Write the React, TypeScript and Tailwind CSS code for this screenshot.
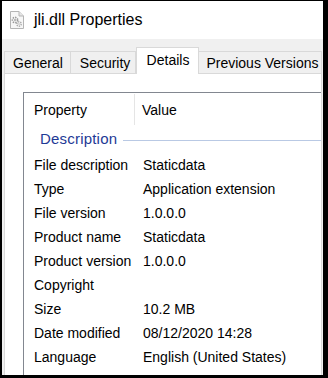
import React from "react";

const rows: [string, string][] = [
  ["File description", "Staticdata"],
  ["Type", "Application extension"],
  ["File version", "1.0.0.0"],
  ["Product name", "Staticdata"],
  ["Product version", "1.0.0.0"],
  ["Copyright", ""],
  ["Size", "10.2 MB"],
  ["Date modified", "08/12/2020 14:28"],
  ["Language", "English (United States)"],
];

function DllIcon() {
  return (
    <svg width="14" height="18" viewBox="0 0 14 18">
      <path d="M0.5 0.5 H9 L13.5 5 V17.5 H0.5 Z" fill="#f7f7f7" stroke="#b5b5b5" />
      <path d="M9 0.5 V5 H13.5" fill="#e6e6e6" stroke="#b5b5b5" />
      <circle cx="5" cy="9" r="2.6" fill="none" stroke="#9a9a9a" strokeWidth="1.6" strokeDasharray="1.4 1" />
      <circle cx="5" cy="9" r="0.9" fill="#9a9a9a" />
      <circle cx="9" cy="13" r="2.2" fill="none" stroke="#a8a8a8" strokeWidth="1.4" strokeDasharray="1.2 0.9" />
      <circle cx="9" cy="13" r="0.7" fill="#a8a8a8" />
    </svg>
  );
}

export default function App() {
  return (
    <div
      className="w-[328px] h-[378px] box-border overflow-hidden flex flex-col border-black border-t border-l-2 border-r-[5px] border-b-[3px] bg-[#f0f0f0] text-black text-[14px]"
      style={{ fontFamily: '"Liberation Sans", Arial, sans-serif' }}
    >
      {/* title bar */}
      <div className="h-[38px] shrink-0 bg-white flex items-center pl-[8px]">
        <div className="w-[14px] h-[18px]">
          <DllIcon />
        </div>
        <span className="ml-[10px] text-[16px]">jli.dll Properties</span>
      </div>

      {/* body */}
      <div className="flex-1 flex flex-col pt-[8px] pl-[2px] pr-[1px] min-h-0">
        {/* tabs */}
        <div className="flex items-end h-[26px] shrink-0 relative z-10">
          <div className="w-[67px] h-[22px] border border-b-0 border-[#d9d9d9] bg-[#f0f0f0] flex items-center pl-[8px] pt-[1px]">
            General
          </div>
          <div className="w-[65px] h-[22px] border border-l-0 border-b-0 border-[#d9d9d9] bg-[#f0f0f0] flex items-center pl-[9px] pt-[1px]">
            Security
          </div>
          <div className="w-[64px] h-[27px] -mb-px border border-b-0 border-[#d9d9d9] bg-white flex items-center pl-[10px] pb-[2px]">
            Details
          </div>
          <div className="w-[123px] h-[22px] border border-l-0 border-b-0 border-[#d9d9d9] bg-[#f0f0f0] flex items-center pl-[7px] pt-[1px] whitespace-nowrap">
            Previous Versions
          </div>
        </div>

        {/* panel */}
        <div className="flex-1 bg-white border-t border-l border-r border-[#d9d9d9] pt-[18px] pl-[18px] min-h-0 overflow-hidden">
          <div className="h-full border-t border-l border-[#828790] bg-white">
            {/* header */}
            <div className="h-[33px] flex items-center">
              <div className="w-[111px] h-[31px] flex items-center pl-[10px] border-r border-[#e5e5e5] pt-[2px]">
                Property
              </div>
              <div className="pl-[7px] pt-[2px]">Value</div>
            </div>
            {/* group header */}
            <div className="h-[27px] flex items-center pl-[16px]">
              <span className="text-[15px] text-[#1e3a96] tracking-[0.2px]">Description</span>
              <div className="flex-1 h-px bg-[#b9c9e4] ml-[6px] mt-[2px]" />
            </div>
            {/* rows */}
            {rows.map(([k, v]) => (
              <div key={k} className="h-[24px] flex items-center">
                <div className="w-[119px] shrink-0 pl-[10px] whitespace-nowrap">{k}</div>
                <div className="whitespace-nowrap">{v}</div>
              </div>
            ))}
          </div>
        </div>
      </div>
    </div>
  );
}
